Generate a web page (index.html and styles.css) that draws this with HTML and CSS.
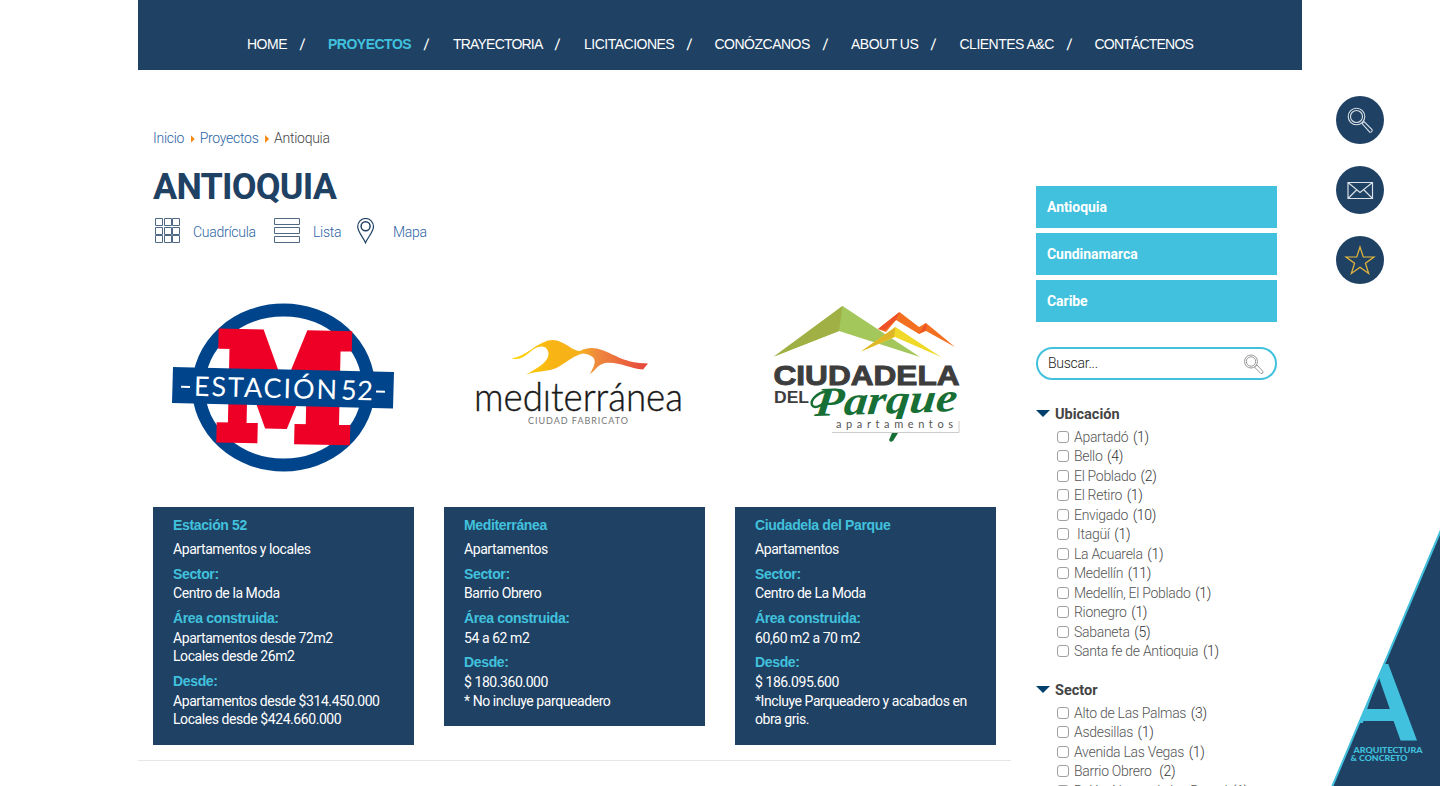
FILE: index.html
```html
<!DOCTYPE html>
<html lang="es">
<head>
<meta charset="utf-8">
<title>Antioquia - Arquitectura &amp; Concreto</title>
<link rel="stylesheet" href="styles.css">
</head>
<body>
<div class="page">
  <nav class="topnav">
    <a>HOME<i>/</i></a><a class="active"><b>PROYECTOS</b><i>/</i></a><a class="tight">TRAYECTORIA<i>/</i></a><a>LICITACIONES<i>/</i></a><a>CONÓZCANOS<i>/</i></a><a>ABOUT US<i>/</i></a><a>CLIENTES A&amp;C<i>/</i></a><a class="tight">CONTÁCTENOS</a>
  </nav>
  <div class="columns">
    <main class="main">
      <div class="crumbs"><a>Inicio</a><span class="arrow"></span><a>Proyectos</a><span class="arrow"></span><span>Antioquia</span></div>
      <h1>ANTIOQUIA</h1>
      <div class="views">
        <svg class="v-grid" width="26" height="26" viewBox="0 0 26 26"><path d="M.5 .5h7v7h-7zM9.500 .5h7v7h-7zM17.500 .5h7v7h-7zM.5 9.500h7v7h-7zM9.500 9.500h7v7h-7zM17.500 9.500h7v7h-7zM.5 17.500h7v7h-7zM9.500 17.500h7v7h-7zM17.500 17.500h7v7h-7z" fill="none" stroke="#4f6985"/></svg>
        <a class="l-grid">Cuadrícula</a>
        <svg class="v-list" width="27" height="26" viewBox="0 0 27 26"><path d="M.5 .5h25v6h-25zM.5 9.500h25v6h-25zM.5 18.500h25v6h-25z" fill="none" stroke="#4f6985"/></svg>
        <a class="l-list">Lista</a>
        <svg class="v-map" width="18" height="26" viewBox="0 0 18 26"><path d="M8.500 24.800C6.500 19.500 .7 14 .7 8.500a7.900 8 0 0 1 15.800 0C16.500 14 10.500 19.500 8.500 24.800z" fill="none" stroke="#1f4164" stroke-width="1.200"/><circle cx="8.600" cy="8.300" r="4.500" fill="none" stroke="#1f4164" stroke-width="1.500"/></svg>
        <a class="l-map">Mapa</a>
      </div>
      <div class="cards">
        <article>
          <svg class="logo" viewBox="153 290 261 200">
            <ellipse cx="283.500" cy="387.500" rx="85" ry="77.500" fill="#fff" stroke="#00458c" stroke-width="13"/>
            <text class="logo-m" transform="translate(283.500 438) rotate(1.200) scale(.865 1)" text-anchor="middle">M</text>
            <path d="M173 367L394 372L393 408.500L172 403z" fill="#00458c"/>
            <g transform="rotate(1.500 283 390)">
              <text class="logo-est" x="194" y="398" textLength="143" lengthAdjust="spacing">ESTACIÓN</text>
              <text class="logo-est" x="341" y="398" textLength="32" lengthAdjust="spacing">52</text>
              <path d="M181 389.500h9M376 389h9" stroke="#fff" stroke-width="2"/>
            </g>
          </svg>
          <div class="info">
            <h2>Estación 52</h2><p class="kind">Apartamentos y locales</p>
            <h3>Sector:</h3><p>Centro de la Moda</p>
            <h3>Área construida:</h3><p class="low">Apartamentos desde 72m2<br>Locales desde 26m2</p>
            <h3>Desde:</h3><p class="low">Apartamentos desde $314.450.000<br>Locales desde $424.660.000</p>
          </div>
        </article>
        <article>
          <svg class="logo" viewBox="444 290 261 200">
            <defs><linearGradient id="dune" x1="0" x2="1"><stop offset="0" stop-color="#ffd800"/><stop offset=".3" stop-color="#f8b414"/><stop offset=".5" stop-color="#f6b11b"/><stop offset=".62" stop-color="#ef8b3d"/><stop offset="1" stop-color="#e7443b"/></linearGradient></defs>
            <path d="M511.500 358.500C526 356 532 347 543 342.500C551 338.500 556 339.500 563 343C571 347 573 350.500 580 351C588 347 595 347.500 602 350C616 355 624 363 648 363.500L643 369.500C628 368 618 361 605 363C597 365 596 370 590 374C594 366 601 356 583 353.500C575 355 568 361 560 366C550 372 542 370 526 374.500C540 367 549 361 548.500 353C547 345 540 345 533 349.500C526 355 521 361 511.500 358.500z" fill="url(#dune)"/>
            <text class="logo-med" x="474" y="410.500" textLength="209" lengthAdjust="spacingAndGlyphs">medıterránea</text>
            <text class="logo-fab" x="528" y="424" textLength="100" lengthAdjust="spacing">CIUDAD FABRICATO</text>
          </svg>
          <div class="info trim">
            <h2>Mediterránea</h2><p class="kind">Apartamentos</p>
            <h3>Sector:</h3><p>Barrio Obrero</p>
            <h3>Área construida:</h3><p class="low short">54 a 62 m2</p>
            <h3>Desde:</h3><p class="low">$ 180.360.000</p><p class="note">* No incluye parqueadero</p>
          </div>
        </article>
        <article>
          <svg class="logo" viewBox="735 290 261 200">
            <path d="M774 356.500L842.500 306L920 357L839 331z" fill="#a4c75b"/><path d="M774 356.500L842.500 306L839 331z" fill="#a0b044"/>
            <path d="M878 329L899.500 312L919 327L926 323L955 347L926 331L919 334L896 320L886 332z" fill="#f37021"/><path d="M878 329L899.500 312L896 320L885 330zM919 334L926 323L926.500 329z" fill="#ee5128"/>
            <path d="M861 351.500L895.500 327L941 357L895 337z" fill="#f0d928"/><path d="M861 351.500L895.500 327L894 337z" fill="#dfb629"/>
            <text class="logo-ciu" x="773.500" y="384.500" textLength="186" lengthAdjust="spacingAndGlyphs">CIUDADELA</text>
            <text class="logo-del" x="774" y="402.500" textLength="35" lengthAdjust="spacingAndGlyphs">DEL</text>
            <text class="logo-par" transform="translate(814 416) rotate(-2) skewX(-8)" textLength="142" lengthAdjust="spacingAndGlyphs">Parque</text>
            <path d="M832 419H959V432H832z" fill="#fff"/><path d="M832 432.500H959V421" fill="none" stroke="#ccc"/>
            <path d="M827 391C817 393 810 400 812 405C814 409 821 406 824 403" fill="none" stroke="#176f35" stroke-width="2.500" stroke-linecap="round"/>
            <text class="logo-apa" x="836" y="428" textLength="117" lengthAdjust="spacing">apartamentos</text>
            <path d="M892 433L898 433L893 441Q890 443 889 440z" fill="#176f35"/>
          </svg>
          <div class="info">
            <h2>Ciudadela del Parque</h2><p class="kind">Apartamentos</p>
            <h3>Sector:</h3><p>Centro de La Moda</p>
            <h3>Área construida:</h3><p class="low short">60,60 m2 a 70 m2</p>
            <h3>Desde:</h3><p class="low">$ 186.095.600</p><p class="note">*Incluye Parqueadero y acabados en obra gris.</p>
          </div>
        </article>
      </div>
    </main>
    <aside class="side">
      <a class="region">Antioquia</a><a class="region">Cundinamarca</a><a class="region">Caribe</a>
      <div class="search"><span>Buscar...</span><svg width="20" height="21" viewBox="0 0 20 21"><g fill="none" stroke="#999" stroke-width="1"><circle cx="7" cy="7.500" r="6.500"/><circle cx="7" cy="7.500" r="4.700"/><path d="M11.500 12.500l1.500-1.500 6 6.500q.5 2-2 2.200l-6-6z"/></g></svg></div>
      <h4>Ubicación</h4>
      <ul>
        <li><i></i>Apartadó <span>(1)</span></li><li><i></i>Bello <span>(4)</span></li><li><i></i>El Poblado <span>(2)</span></li><li><i></i>El Retiro <span>(1)</span></li><li><i></i>Envigado <span>(10)</span></li><li><i></i>&nbsp;Itagüí <span>(1)</span></li><li><i></i>La Acuarela <span>(1)</span></li><li><i></i>Medellín <span>(11)</span></li><li><i></i>Medellín, El Poblado <span>(1)</span></li><li><i></i>Rionegro <span>(1)</span></li><li><i></i>Sabaneta <span>(5)</span></li><li><i></i>Santa fe de Antioquia <span>(1)</span></li>
      </ul>
      <h4>Sector</h4>
      <ul>
        <li><i></i>Alto de Las Palmas <span>(3)</span></li><li><i></i>Asdesillas <span>(1)</span></li><li><i></i>Avenida Las Vegas <span>(1)</span></li><li><i></i>Barrio Obrero&nbsp; <span>(2)</span></li><li><i></i>Belén, Nueva de los Bernal <span>(1)</span></li>
      </ul>
    </aside>
  </div>
</div>
<div class="tools">
  <svg viewBox="0 0 48 48"><circle cx="24" cy="24" r="24" fill="#1f4164"/><g fill="none" stroke="#d9e0e6" stroke-width="1.100"><circle cx="20.500" cy="20.500" r="8.300"/><circle cx="20.500" cy="20.500" r="6"/><path d="M26 27.500l2-2 8 8q.7 2.500-2 2.800z"/></g></svg>
  <svg viewBox="0 0 48 48"><circle cx="24" cy="24" r="24" fill="#1f4164"/><path d="M12 16.500h24.500v16H12zL24 26.500L36.500 16.500M12 32.500L20.500 24M36.500 32.500L28 24" fill="none" stroke="#d9e0e6" stroke-width="1.200"/></svg>
  <svg viewBox="0 0 48 48"><circle cx="24" cy="24" r="24" fill="#1f4164"/><path d="M24 11l3.300 10H38l-8.600 6.200 3.300 10.300L24 31.200l-8.700 6.300 3.300-10.300L10 21h10.700z" fill="none" stroke="#e9b93c" stroke-width="1.200"/></svg>
</div>
<svg class="corner" viewBox="1330 528 110 258">
  <defs><clipPath id="edge"><path d="M1440 531V786H1395L1385 723H1358L1359 722z"/></clipPath></defs>
  <path d="M1440 531V786H1332z" fill="#1f4164"/>
  <g clip-path="url(#edge)"><text class="corner-a" x="1337" y="741" textLength="83" lengthAdjust="spacingAndGlyphs">A</text></g>
  <path d="M1441 530L1332 787" stroke="#41c1dd" stroke-width="2"/>
  <text class="corner-t" x="1353.500" y="753" textLength="69" lengthAdjust="spacingAndGlyphs">ARQUITECTURA</text>
  <text class="corner-t" x="1350.500" y="761" textLength="57" lengthAdjust="spacingAndGlyphs">&amp; CONCRETO</text>
</svg>
</body>
</html>
```
FILE: styles.css
```css
* { box-sizing: border-box; }
html, body { margin: 0; height: 786px; overflow: hidden; }
body { position: relative; background: #fff; color: #444; font: 14px/18px Roboto, "Liberation Sans", sans-serif; }
h1, h2, h3, h4, p, ul { margin: 0; padding: 0; }
.page { width: 1164px; margin: 0 auto; }
.topnav { height: 70px; padding: 34px 0 0 109px; background: #1f4164; color: #fff; display: grid; grid-template-columns: 81px 125px 131px 130.500px 136.500px 108.500px 135px 110px; align-content: start; font: 14px/20px "Liberation Sans", sans-serif; letter-spacing: -.5px; white-space: nowrap; }
.topnav .tight { letter-spacing: -.8px; }
.topnav b { color: #41c1dd; }
.topnav i { font-size: 16px; margin-left: 13px; font-style: normal; display: inline-block; transform: translateY(1px) skewX(-6deg); }
.columns { display: flex; height: 716px; }
.main { width: 873px; height: 691px; padding: 59px 15px 0; border-bottom: 1px solid #e7e7e7; }
.crumbs { display: flex; align-items: center; height: 18px; font-weight: 300; letter-spacing: -.27px; }
.crumbs a, .views a { color: #2b64a5; font-weight: 300; }
.arrow { width: 4px; height: 8px; margin: 2px 5px 0 6.500px; background: #f7870f; clip-path: polygon(0 0, 100% 50%, 0 100%); }
h1 { margin-top: 20px; font-size: 36px; line-height: 40px; font-weight: 700; color: #1f4164; letter-spacing: -.8px; }
.views { display: flex; align-items: center; height: 26px; margin: 11px 0 0 2px; letter-spacing: -.27px; }
.l-grid { width: 63px; margin: 2px 18px 0 12px; }
.l-list { width: 29px; margin: 2px 15px 0 12px; }
.l-map { margin: 2px 0 0 18px; }
.cards { display: flex; gap: 30px; align-items: flex-start; margin-top: 46px; }
.cards article { width: 261px; }
.logo { display: block; width: 261px; height: 200px; }
.info { margin-top: 17px; padding: 9px 20px 17px; background: #1f4164; color: #fff; }
.info.trim { padding-bottom: 16px; }
h2, h3 { font: bold 14px/18px "Liberation Sans", sans-serif; color: #41c1dd; letter-spacing: -.35px; }
.kind { margin-top: 6px; }
h3 { margin-top: 7px; }
.info p { letter-spacing: -.43px; }
h3 + p { margin-top: 1px; }
h3 + p.low { margin-top: 2px; }
.short + h3 { margin-top: 6px; }
.note { margin-top: 1px; }
.side { width: 241px; margin: 116px 0 0 25px; }
.region { display: block; height: 42px; margin-bottom: 5px; padding-left: 11px; background: #41c1dd; color: #fff; font-weight: 700; line-height: 42px; letter-spacing: -.05px; }
.search { display: flex; justify-content: space-between; height: 33px; margin-top: 25px; padding: 5px 11px 0 10px; border: 2px solid #41c1dd; border-radius: 17px; font-weight: 300; letter-spacing: -.25px; color: #222; }
h4 { display: flex; align-items: center; height: 18px; margin-top: 25.500px; font-size: 14.500px; font-weight: 700; color: #444; }
h4::before { content: ""; width: 14px; height: 7px; margin: -2px 5px 0 0; background: #00406b; clip-path: polygon(0 0, 100% 0, 50% 100%); }
ul { list-style: none; margin: 3.500px 0 0 21px; font-weight: 300; color: #555; }
li { display: flex; align-items: center; height: 19.500px; white-space: pre; letter-spacing: -.3px; }
li i { width: 12px; height: 12px; margin-right: 5px; border: 1px solid #a0a0a0; border-radius: 3px; background: #fff; }
li span { color: #333; margin-left: 1.500px; }
ul + h4 { margin-top: 20.500px; }
.tools { position: absolute; left: 1336px; top: 96px; display: grid; gap: 22px; }
.tools svg { width: 48px; height: 48px; display: block; }
.corner { position: absolute; right: 0; bottom: 0; width: 110px; height: 258px; }
.corner-a { font: bold 112px "Liberation Sans", sans-serif; fill: #41c1dd; }
.corner-t { font: 900 7.500px Lato, sans-serif; fill: #41c1dd; }
.logo-m { font: bold 140px "DejaVu Serif", serif; fill: #ee0026; stroke: #ee0026; stroke-width: 12px; }
.logo-est { font: 27px Lato, sans-serif; fill: #fff; }
.logo-med { font: 300 39px Lato, sans-serif; fill: #181818; stroke: #181818; stroke-width: .4px; }
.logo-fab { font: 9px Lato, sans-serif; fill: #777; }
.logo-ciu { font: bold 28px "Liberation Sans", sans-serif; fill: #3d3d3d; stroke: #3d3d3d; stroke-width: 1px; }
.logo-del { font: bold 16px "Liberation Sans", sans-serif; fill: #3d3d3d; }
.logo-par { font: italic bold 41px "Liberation Serif", serif; fill: #176f35; }
.logo-apa { font: 11px Lato, sans-serif; fill: #555; }
```
